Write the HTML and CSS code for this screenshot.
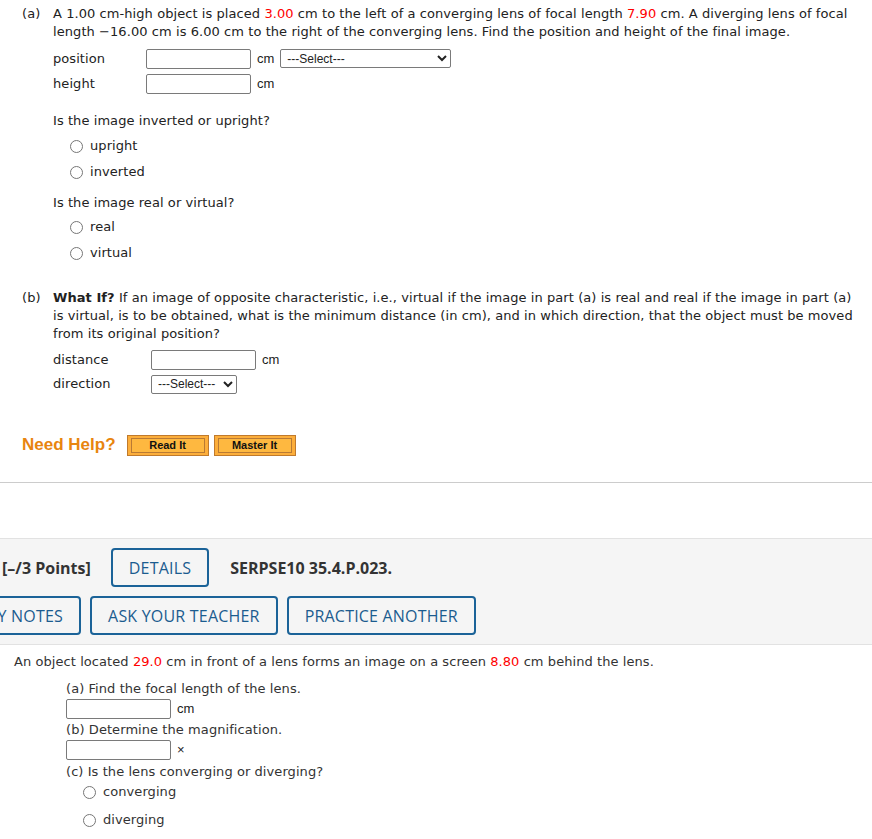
FILE: index.html
```html
<!DOCTYPE html>
<html>
<head>
<meta charset="utf-8">
<link rel="stylesheet" href="styles.css">
</head>
<body>
<div class="part part-a">
  <div class="plabel">(a)</div>
  <div class="pbody">
    <div class="ptext">A 1.00 cm-high object is placed <span class="red">3.00</span> cm to the left of a converging lens of focal length <span class="red">7.90</span> cm. A diverging lens of focal length &minus;16.00 cm is 6.00 cm to the right of the converging lens. Find the position and height of the final image.</div>
    <div class="form form-a">
      <div class="frow"><span class="flabel">position</span><input class="tbox" type="text"><span class="unit">cm</span><select class="sel sel-wide"><option>---Select---</option></select></div>
      <div class="frow"><span class="flabel">height</span><input class="tbox" type="text"><span class="unit">cm</span></div>
    </div>
    <div class="q q1">Is the image inverted or upright?</div>
    <div class="radios radios-1">
      <label class="rrow"><input type="radio" name="r1"><span>upright</span></label>
      <label class="rrow"><input type="radio" name="r1"><span>inverted</span></label>
    </div>
    <div class="q q2">Is the image real or virtual?</div>
    <div class="radios radios-2">
      <label class="rrow"><input type="radio" name="r2"><span>real</span></label>
      <label class="rrow"><input type="radio" name="r2"><span>virtual</span></label>
    </div>
  </div>
</div>
<div class="part part-b">
  <div class="plabel">(b)</div>
  <div class="pbody">
    <div class="ptext"><b>What If?</b> If an image of opposite characteristic, i.e., virtual if the image in part (a) is real and real if the image in part (a) is virtual, is to be obtained, what is the minimum distance (in cm), and in which direction, that the object must be moved from its original position?</div>
    <div class="form form-b">
      <div class="frow frow-b"><span class="flabel flabel-b">distance</span><input class="tbox" type="text"><span class="unit">cm</span></div>
      <div class="frow frow-b"><span class="flabel flabel-b">direction</span><select class="sel sel-narrow"><option>---Select---</option></select></div>
    </div>
  </div>
</div>
<div class="help">
  <span class="help-title">Need Help?</span>
  <span class="hbtn"><span class="hbtn-in">Read It</span></span>
  <span class="hbtn"><span class="hbtn-in">Master It</span></span>
</div>
<div class="rule"></div>
<div class="bar">
  <div class="bar-row bar-row1">
    <span class="points">[&ndash;/3 Points]</span>
    <span class="obtn">DETAILS</span>
    <span class="code">SERPSE10 35.4.P.023.</span>
  </div>
  <div class="bar-row bar-row2">
    <span class="obtn">MY NOTES</span>
    <span class="obtn">ASK YOUR TEACHER</span>
    <span class="obtn">PRACTICE ANOTHER</span>
  </div>
</div>
<div class="q2sec">
  <div class="intro">An object located <span class="red">29.0</span> cm in front of a lens forms an image on a screen <span class="red">8.80</span> cm behind the lens.</div>
  <div class="subs">
    <div class="sub sub-a">(a) Find the focal length of the lens.</div>
    <div class="ans"><input class="tbox" type="text"><span class="unit">cm</span></div>
    <div class="sub sub-b">(b) Determine the magnification.</div>
    <div class="ans"><input class="tbox" type="text"><span class="unit">&times;</span></div>
    <div class="sub sub-c">(c) Is the lens converging or diverging?</div>
    <div class="radios radios-c">
      <label class="rrow rrow-c"><input type="radio" name="r3"><span>converging</span></label>
      <label class="rrow rrow-c"><input type="radio" name="r3"><span>diverging</span></label>
    </div>
  </div>
</div>
</body>
</html>
```

FILE: styles.css
```css
html, body {
  margin: 0;
  padding: 0;
  background: #fff;
}
body {
  font-family: "DejaVu Sans", Verdana, sans-serif;
  font-size: 13px;
  line-height: 18px;
  letter-spacing: 0.07px;
  color: #222;
  overflow: hidden;
  width: 872px;
}
.red { color: #f00; }

.part {
  display: flex;
  padding-left: 22px;
}
.part-a { padding-top: 5px; }
.part-b { margin-top: 23px; }
.plabel {
  width: 31px;
  flex: none;
}
.pbody {
  width: 806px;
}
.ptext b { font-weight: bold; }

.form-a { margin-top: 5px; }
.form-b { margin-top: 5px; }
.frow {
  display: flex;
  align-items: center;
  height: 25px;
}
.frow-b { height: 24px; }
.flabel {
  width: 93px;
  flex: none;
}
.flabel-b { width: 98px; }
.tbox {
  box-sizing: border-box;
  width: 105px;
  height: 20px;
  margin: 0;
  padding: 1px 3px;
  border: 1px solid #7a7a7a;
  border-radius: 2px;
  background: #fff;
  font: 13px "Liberation Sans", Arial, sans-serif;
}
.unit {
  font-family: "Liberation Sans", Arial, sans-serif;
  font-size: 13px;
  letter-spacing: 0;
  margin-left: 6px;
  color: #222;
}
.sel {
  box-sizing: border-box;
  height: 19px;
  margin: 0;
  padding: 0 0 0 2px;
  border: 1px solid #7a7a7a;
  border-radius: 2px;
  background: #fff;
  color: #222;
  letter-spacing: 0;
  font: 12px "Liberation Sans", Arial, sans-serif;
}
.sel-wide {
  width: 171px;
  margin-left: 6px;
}
.sel-narrow { width: 86px; }

.q1 { margin-top: 16px; }
.q2 { margin-top: 9px; }
.radios-1 { margin-top: 3px; }
.radios-2 { margin-top: 2px; }
.rrow {
  display: flex;
  align-items: center;
  height: 26px;
  padding-left: 16px;
}
.rrow input {
  margin: 0 7px 0 1px;
  width: 13px;
  height: 13px;
}

.help {
  display: flex;
  align-items: center;
  height: 22px;
  margin-top: 38px;
  padding-left: 22px;
  letter-spacing: 0;
}
.help-title {
  font-family: "Liberation Sans", Arial, sans-serif;
  font-weight: bold;
  font-size: 17px;
  color: #e8850f;
  margin-right: 11px;
}
.hbtn {
  box-sizing: border-box;
  width: 82px;
  height: 21px;
  margin-right: 5px;
  padding: 2px 3px;
  border: 1px solid #c07a2c;
  background: #fcae3b;
  display: flex;
}
.hbtn-in {
  flex: 1;
  border: 1px solid #b97a34;
  background: #feb840;
  font-family: "Liberation Sans", Arial, sans-serif;
  font-weight: bold;
  font-size: 11px;
  line-height: 13px;
  color: #111;
  text-align: center;
}

.rule {
  margin-top: 26px;
  height: 1px;
  background: #cccccc;
}

.bar {
  margin-top: 55px;
  border-top: 1px solid #e2e2e2;
  border-bottom: 1px solid #e2e2e2;
  background: #f5f5f5;
  padding: 9px 0;
  font-family: "Open Sans", sans-serif;
  font-size: 16px;
  letter-spacing: 0.2px;
  color: #333;
}
.bar-row {
  display: flex;
  align-items: center;
  height: 39px;
  white-space: nowrap;
}
.bar-row2 { margin-top: 9px; margin-left: -35px; }
.bar-row1 { margin-left: 2px; }
.points {
  font-weight: 700;
  letter-spacing: 0;
  margin-right: 20px;
}
.code {
  font-weight: 700;
  letter-spacing: 0;
  margin-left: 21px;
}
.obtn {
  box-sizing: border-box;
  height: 39px;
  display: flex;
  align-items: center;
  padding: 0 16px;
  border: 2px solid #1b6398;
  border-radius: 4px;
  color: #1b5c8f;
  background: transparent;
  font-weight: 500;
}
.bar-row2 .obtn { margin-right: 9px; }

.q2sec {
  color: #333;
}
.intro {
  margin-top: 8px;
  padding-left: 14px;
}
.subs { padding-left: 66px; }
.sub-a { margin-top: 9px; }
.ans {
  display: flex;
  align-items: center;
  height: 20px;
  margin-top: 1px;
}
.sub-b { margin-top: 2px; }
.sub-c { margin-top: 3px; }
.radios-c { margin-top: -3px; }
.rrow-c {
  height: 28px;
  padding-left: 16px;
}
```
